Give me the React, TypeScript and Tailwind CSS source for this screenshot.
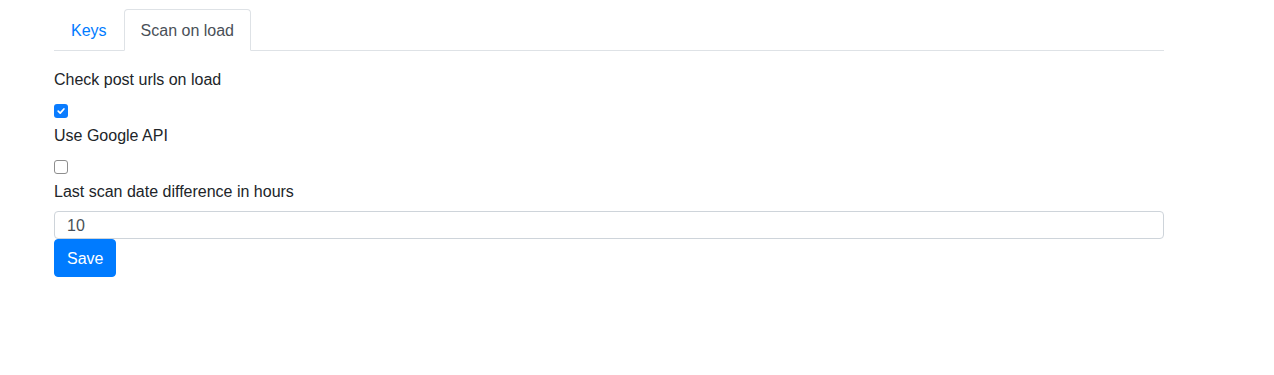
import React from "react";

export default function App() {
  return (
    <div className="min-h-[375px] w-full bg-white text-[#212529]" style={{ fontFamily: '"Liberation Sans", Arial, sans-serif' }}>
      <div className="ml-[54px] w-[1110px] pt-[9px]">
        <div className="flex border-b border-[#dee2e6]">
          <div className="mb-[-1px] border border-transparent px-4 pt-[9px] pb-[7px] text-[16px] leading-6 text-[#007bff]">Keys</div>
          <div className="mb-[-1px] rounded-t-[4px] border border-[#dee2e6] border-b-white bg-white px-4 pt-[9px] pb-[7px] text-[16px] leading-6 text-[#495057]">Scan on load</div>
        </div>
        <div className="pt-4 text-[16px]">
          <div className="mb-2 h-6 pt-[2px] leading-[22px]">Check post urls on load</div>
          <div className="flex h-6 items-center">
            <div className="flex h-[14px] w-[14px] items-center justify-center rounded-[3px] bg-[#0a7cff]">
              <svg width="10" height="10" viewBox="0 0 10 10">
                <path d="M2.2 5.2 L4.2 7.1 L7.9 3" fill="none" stroke="white" strokeWidth="1.7" strokeLinecap="round" strokeLinejoin="round" />
              </svg>
            </div>
          </div>
          <div className="mb-2 h-6 pt-[2px] leading-[22px]">Use Google API</div>
          <div className="flex h-6 items-center">
            <div className="h-[14px] w-[14px] rounded-[3px] border border-[#8e8e8e] bg-white" />
          </div>
          <div className="mb-2 h-6 pt-[2px] leading-[22px]">Last scan date difference in hours</div>
          <div className="flex h-[28px] items-center rounded-[4px] border border-[#ced4da] px-3 pt-[2px] text-[16px] text-[#495057]">10</div>
          <button className="h-[38px] rounded-[4px] border border-[#007bff] bg-[#007bff] px-3 pt-[2px] text-[16px] leading-6 text-white">Save</button>
        </div>
      </div>
    </div>
  );
}
